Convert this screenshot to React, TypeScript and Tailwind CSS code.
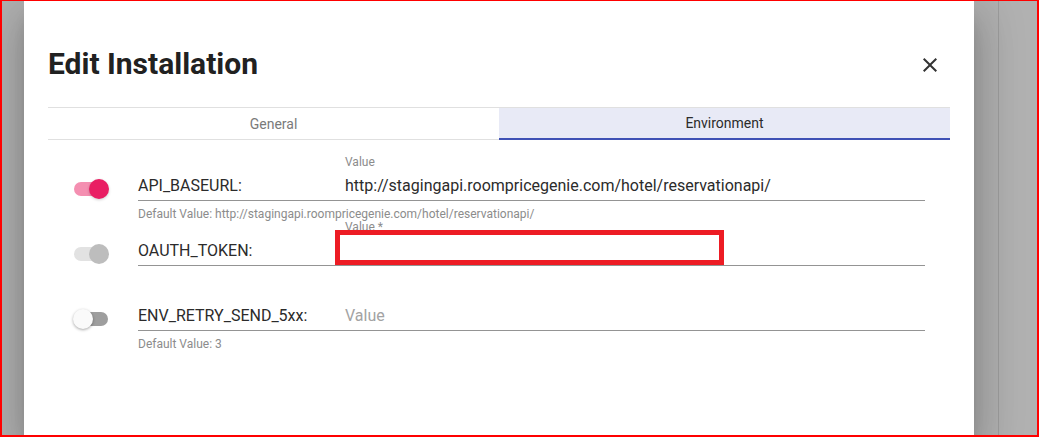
import React from 'react';

const Toggle = ({ on, disabled }: { on?: boolean; disabled?: boolean }) => {
  const track = disabled ? 'bg-[#e2e2e2]' : on ? 'bg-[#f48fb1]' : 'bg-[#9e9e9e]';
  const thumb = disabled
    ? 'bg-[#bdbdbd] left-[16px]'
    : on
      ? 'bg-[#e91e63] left-[16px] shadow-[0_1px_3px_rgba(0,0,0,0.2)]'
      : 'bg-[#fafafa] left-0 shadow-[0_1px_3px_rgba(0,0,0,0.35)]';
  return (
    <div className="relative w-[36px] h-[20px]">
      <div className={`absolute left-[1px] top-[3px] w-[34px] h-[14px] rounded-full ${track}`} />
      <div className={`absolute top-0 w-[20px] h-[20px] rounded-full ${thumb}`} />
    </div>
  );
};

type Row = {
  name: string;
  label?: string;
  value?: string;
  placeholder?: string;
  helper?: string;
  on?: boolean;
  disabled?: boolean;
  marked?: boolean;
};

const rows: Row[] = [
  {
    name: 'API_BASEURL:',
    label: 'Value',
    value: 'http://stagingapi.roompricegenie.com/hotel/reservationapi/',
    helper: 'Default Value: http://stagingapi.roompricegenie.com/hotel/reservationapi/',
    on: true,
  },
  { name: 'OAUTH_TOKEN:', label: 'Value *', disabled: true, marked: true },
  { name: 'ENV_RETRY_SEND_5xx:', placeholder: 'Value', helper: 'Default Value: 3' },
];

const EnvRow = ({ row }: { row: Row }) => (
  <div className="flex pl-[25px] pr-[25px]">
    <div className="w-[65px] pt-[23px]">
      <Toggle on={row.on} disabled={row.disabled} />
    </div>
    <div className="flex-1 relative">
      <div className="h-[12px] pl-[207px] text-[12px] leading-[12px] text-[#8c8c8c]">{row.label}</div>
      <div className="mt-[8px] flex pb-[5px] border-b border-[#949494] text-[16px] leading-[19px]">
        <span className="w-[207px] text-[#2b2b2b]">{row.name}</span>
        {row.value ? (
          <span className="text-[#2b2b2b]">{row.value}</span>
        ) : (
          <span className="text-[#a3a3a3]">{row.placeholder}</span>
        )}
      </div>
      <div className="h-[20px] pt-[7px] text-[12px] leading-[12px] text-[#8c8c8c]">{row.helper}</div>
      {/* annotation box drawn over the empty token field */}
      {row.marked && (
        <div className="absolute left-[197px] top-[9px] w-[389px] h-[35px] border-[5px] border-[#ed1c24]" />
      )}
    </div>
  </div>
);

export default function App() {
  return (
    <div
      className="w-[1039px] h-[437px] overflow-hidden flex bg-[#b1b1b1] border-t border-l-2 border-r-2 border-b-2 border-[#ff0000]"
      style={{ fontFamily: 'Roboto, "Liberation Sans", sans-serif' }}
    >
      <div className="w-[22px] shrink-0" />
      <div className="w-[950px] shrink-0 h-full bg-white px-[24px] relative z-10 shadow-[0_11px_15px_-7px_rgba(0,0,0,0.2),0_24px_38px_3px_rgba(0,0,0,0.14),0_9px_46px_8px_rgba(0,0,0,0.12)]">
        <div className="pt-[48px] flex items-center justify-between">
          <h2 className="text-[30px] leading-[30px] font-bold text-[#212121]">Edit Installation</h2>
          <button className="mr-[8px] mt-[2px] text-[#333]">
            <svg width="24" height="24" viewBox="0 0 24 24" fill="currentColor">
              <path d="M19 6.41 17.59 5 12 10.59 6.41 5 5 6.41 10.59 12 5 17.59 6.41 19 12 13.41 17.59 19 19 17.59 13.41 12z" />
            </svg>
          </button>
        </div>

        <div className="mt-[28px] flex border-t border-[#e0e0e0] text-[14px] leading-[20px]">
          <div className="flex-1 h-[32px] flex items-center justify-center border-b border-[#e0e0e0] text-[#7a7a7a]">General</div>
          <div className="flex-1 h-[32px] flex items-center justify-center bg-[#e8eaf6] border-b-2 border-[#3f51b5] text-[#2b2b2b]">Environment</div>
        </div>

        <div className="pt-[16px]">
          {rows.map((r) => (
            <EnvRow key={r.name} row={r} />
          ))}
        </div>
      </div>
      <div className="w-[24px] shrink-0" />
      <div className="flex-1 border-l border-[#9d9d9d]" />
    </div>
  );
}
